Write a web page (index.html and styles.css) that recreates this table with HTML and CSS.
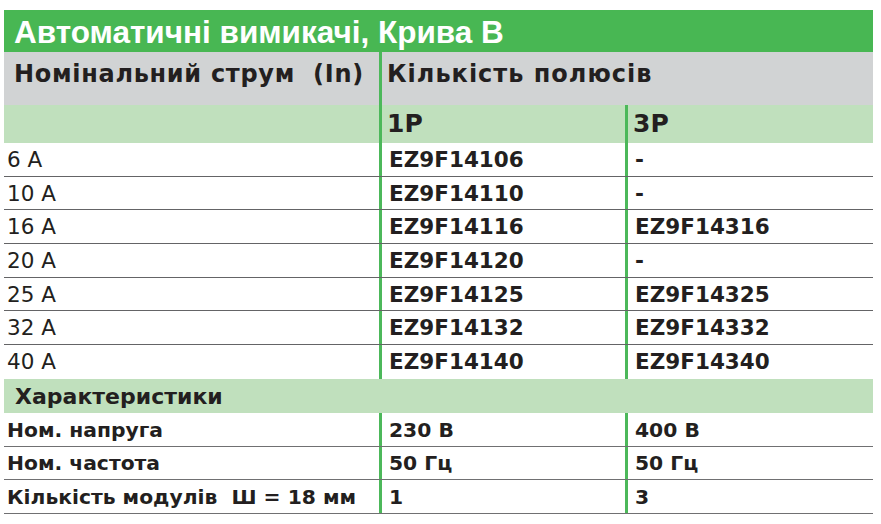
FILE: index.html
```html
<!DOCTYPE html>
<html lang="uk">
<head>
<meta charset="utf-8">
<title>Автоматичні вимикачі, Крива B</title>
<link rel="stylesheet" href="styles.css">
</head>
<body>
<div class="sheet">
  <div class="title">Автоматичні вимикачі, Крива B</div>
  <div class="row head">
    <div class="cell c0">Номінальний струм&nbsp; (In)</div>
    <div class="cell vl span2">Кількість полюсів</div>
  </div>
  <div class="row sub">
    <div class="cell c0"></div>
    <div class="cell vl">1P</div>
    <div class="cell vl">3P</div>
  </div>
  <div class="data">
    <div class="row line"><div class="cell c0 reg">6 A</div><div class="cell vl">EZ9F14106</div><div class="cell vl">-</div></div>
    <div class="row line"><div class="cell c0 reg">10 A</div><div class="cell vl">EZ9F14110</div><div class="cell vl">-</div></div>
    <div class="row line"><div class="cell c0 reg">16 A</div><div class="cell vl">EZ9F14116</div><div class="cell vl">EZ9F14316</div></div>
    <div class="row line"><div class="cell c0 reg">20 A</div><div class="cell vl">EZ9F14120</div><div class="cell vl">-</div></div>
    <div class="row line"><div class="cell c0 reg">25 A</div><div class="cell vl">EZ9F14125</div><div class="cell vl">EZ9F14325</div></div>
    <div class="row line"><div class="cell c0 reg">32 A</div><div class="cell vl">EZ9F14132</div><div class="cell vl">EZ9F14332</div></div>
    <div class="row line last"><div class="cell c0 reg">40 A</div><div class="cell vl">EZ9F14140</div><div class="cell vl">EZ9F14340</div></div>
  </div>
  <div class="band">Характеристики</div>
  <div class="data specs">
    <div class="row line"><div class="cell c0">Ном. напруга</div><div class="cell vl">230 B</div><div class="cell vl">400 B</div></div>
    <div class="row line"><div class="cell c0">Ном. частота</div><div class="cell vl">50 Гц</div><div class="cell vl">50 Гц</div></div>
    <div class="row line"><div class="cell c0">Кількість модулів&nbsp; Ш = 18 мм</div><div class="cell vl">1</div><div class="cell vl">3</div></div>
  </div>
</div>
</body>
</html>
```

FILE: styles.css
```css
html, body {
  margin: 0;
  padding: 0;
  background: #ffffff;
}
body {
  padding: 10px 8px 0 4px;
  font-family: "DejaVu Sans", "Liberation Sans", sans-serif;
  color: #231f20;
}
.sheet {
  width: 869px;
}
.title {
  height: 42px;
  background: #48b753;
  color: #ffffff;
  font-family: "Liberation Sans", Arial, sans-serif;
  font-size: 31.5px;
  font-weight: bold;
  line-height: 40px;
  padding: 2px 0 0 10px;
  box-sizing: border-box;
  white-space: nowrap;
}
.row {
  display: grid;
  grid-template-columns: 375px 246px 248px;
}
.cell {
  font-size: 21.5px;
  font-weight: bold;
  line-height: 22px;
  white-space: nowrap;
  display: flex;
  align-items: center;
  box-sizing: border-box;
}
.vl {
  border-left: 3px solid #4cb85a;
  padding-left: 7px;
}
.span2 {
  grid-column: 2 / 4;
}
.head {
  height: 53px;
  background: #d1d3d4;
}
.head .cell {
  align-items: flex-start;
  padding-top: 10px;
  font-size: 24px;
  line-height: 24px;
  letter-spacing: 0.7px;
}
.head .c0 {
  padding-left: 10px;
}
.head .vl {
  padding-left: 5px;
  letter-spacing: 1px;
}
.sub {
  height: 38px;
  background: #c0e0bd;
}
.sub .cell {
  padding-left: 5px;
  font-size: 25px;
  line-height: 26px;
}
.sub .c0 {
  padding-left: 0;
}
.line {
  height: 33.7px;
  border-bottom: 1px solid #646466;
  box-sizing: border-box;
}
.line .cell {
  padding-top: 1px;
}
.line.last {
  border-bottom: none;
}
.c0 {
  padding-left: 3px;
}
.reg {
  font-weight: normal;
}
.specs .cell {
  font-size: 20.3px;
}
.specs .line {
  border-bottom-color: #707072;
}
.band {
  height: 34px;
  background: #c0e0bd;
  font-size: 22px;
  font-weight: bold;
  line-height: 34px;
  padding: 1px 0 0 11px;
  box-sizing: border-box;
}
```
